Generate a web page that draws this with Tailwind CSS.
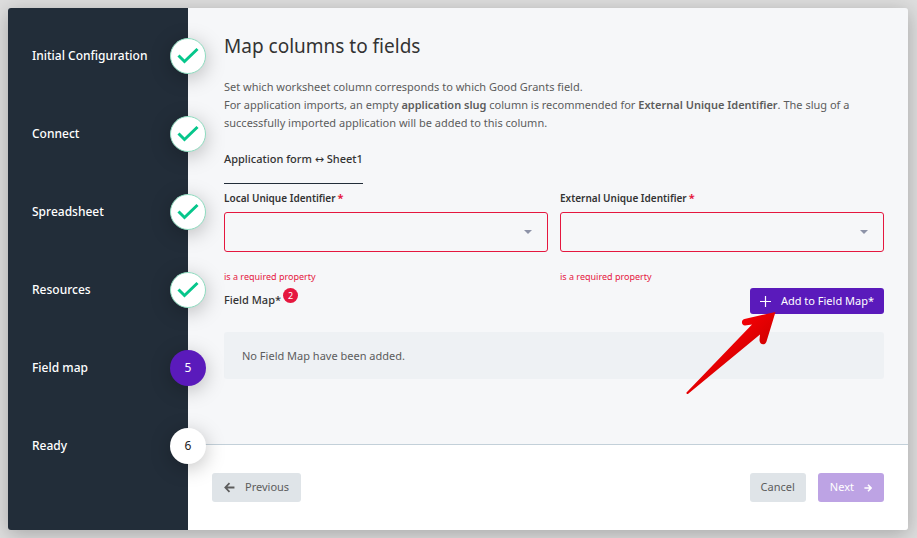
<!DOCTYPE html>
<html lang="en">
  <head>
    <meta charset="UTF-8" />
    <meta name="viewport" content="width=device-width, initial-scale=1.0" />
    <script src="https://cdn.jsdelivr.net/npm/@tailwindcss/browser@4"></script>
    <title>Map columns to fields</title>
  </head>
  <body class="min-h-screen bg-[#dedede] p-2 font-['Noto_Sans','Open_Sans',sans-serif] text-[11px] text-[#5c5c5c]">
    <div class="mr-px flex rounded-[3px] shadow-[0_4px_20px_rgba(0,0,0,0.25)]">
      <!-- Steps -->
      <nav class="relative z-10 w-[180px] shrink-0 rounded-l-[3px] bg-[#222d39] pt-[30px] pb-16 pl-6">
        <ol class="-mr-[18px] flex flex-col gap-[42px] text-xs font-medium text-white">
          <li class="flex items-center justify-between">
            Initial Configuration
            <span class="flex size-9 items-center justify-center rounded-full border border-[#8fdcc0] bg-white shadow-[0_4px_20px_rgba(0,0,0,0.25)]">
              <svg class="size-6" viewBox="0 0 24 24" fill="none" stroke="#06c68b" stroke-width="3"><path d="M2.5 11.5L8.5 17.5L21.5 5" /></svg>
            </span>
          </li>
          <li class="flex items-center justify-between">
            Connect
            <span class="flex size-9 items-center justify-center rounded-full border border-[#8fdcc0] bg-white shadow-[0_4px_20px_rgba(0,0,0,0.25)]">
              <svg class="size-6" viewBox="0 0 24 24" fill="none" stroke="#06c68b" stroke-width="3"><path d="M2.5 11.5L8.5 17.5L21.5 5" /></svg>
            </span>
          </li>
          <li class="flex items-center justify-between">
            Spreadsheet
            <span class="flex size-9 items-center justify-center rounded-full border border-[#8fdcc0] bg-white shadow-[0_4px_20px_rgba(0,0,0,0.25)]">
              <svg class="size-6" viewBox="0 0 24 24" fill="none" stroke="#06c68b" stroke-width="3"><path d="M2.5 11.5L8.5 17.5L21.5 5" /></svg>
            </span>
          </li>
          <li class="flex items-center justify-between">
            Resources
            <span class="flex size-9 items-center justify-center rounded-full border border-[#8fdcc0] bg-white shadow-[0_4px_20px_rgba(0,0,0,0.25)]">
              <svg class="size-6" viewBox="0 0 24 24" fill="none" stroke="#06c68b" stroke-width="3"><path d="M2.5 11.5L8.5 17.5L21.5 5" /></svg>
            </span>
          </li>
          <li class="flex items-center justify-between" aria-current="step">
            Field map
            <span class="flex size-9 items-center justify-center rounded-full bg-[#5a1abb] font-normal shadow-[0_4px_20px_rgba(0,0,0,0.25)]">5</span>
          </li>
          <li class="flex items-center justify-between">
            Ready
            <span class="flex size-9 items-center justify-center rounded-full bg-white font-normal text-[#222] shadow-[0_4px_20px_rgba(0,0,0,0.25)]">6</span>
          </li>
        </ol>
      </nav>

      <div class="flex min-w-0 flex-1 flex-col">
        <!-- Content -->
        <main class="flex-1 rounded-tr-[3px] border-b border-[#c3d0d9] bg-[#f6f7f9] pt-6 pr-6 pb-[65px] pl-9">
          <h1 class="text-[19px] leading-7 text-[#333]">Map columns to fields</h1>
          <div class="mt-[18px] leading-[18px]">
            <p>Set which worksheet column corresponds to which Good Grants field.</p>
            <p>
              For application imports, an empty <strong class="font-semibold">application slug</strong> column is recommended for
              <strong class="font-semibold">External Unique Identifier</strong>. The slug of a successfully imported application will be added to this column.
            </p>
          </div>

          <h2 class="mt-[19px] inline-block border-b border-[#222d39] pb-[15px] leading-4 font-medium text-[#333]">Application form <span class="font-['DejaVu_Sans']">↔</span> Sheet1</h2>

          <form>
            <div class="mt-[6px] grid grid-cols-2 gap-3">
              <div>
                <label for="local-id" class="flex gap-[2px] text-[10px] leading-4 font-semibold text-[#333]">Local Unique Identifier <span class="text-[11px] font-bold text-[#e5173f]">*</span></label>
                <div class="relative mt-[6px]">
                  <select id="local-id" class="block h-10 w-full appearance-none rounded-[3px] border border-[#e5173f] bg-transparent px-4"></select>
                  <svg class="pointer-events-none absolute top-[18px] right-4 h-1 w-2" viewBox="0 0 8 4" fill="#8d93a8"><path d="M0 0h8L4 4z" /></svg>
                </div>
                <p class="mt-[18px] text-[9px] leading-[14px] text-[#e5173f]">is a required property</p>
              </div>
              <div>
                <label for="external-id" class="flex gap-[2px] text-[10px] leading-4 font-semibold text-[#333]">External Unique Identifier <span class="text-[11px] font-bold text-[#e5173f]">*</span></label>
                <div class="relative mt-[6px]">
                  <select id="external-id" class="block h-10 w-full appearance-none rounded-[3px] border border-[#e5173f] bg-transparent px-4"></select>
                  <svg class="pointer-events-none absolute top-[18px] right-4 h-1 w-2" viewBox="0 0 8 4" fill="#8d93a8"><path d="M0 0h8L4 4z" /></svg>
                </div>
                <p class="mt-[18px] text-[9px] leading-[14px] text-[#e5173f]">is a required property</p>
              </div>
            </div>

            <div class="mt-1 flex items-start justify-between">
              <div class="flex items-start gap-[2px]">
                <h3 class="pt-1 leading-4 font-medium text-[#333]">Field Map*</h3>
                <span class="flex size-[15px] items-center justify-center rounded-full bg-[#e5173f] text-[9px] text-white">2</span>
              </div>
              <div class="relative">
                <button type="button" class="flex h-[26px] items-center gap-[10px] rounded-[3px] bg-[#5a1abb] px-[10px] text-white">
                  <svg class="size-[11px]" viewBox="0 0 11 11" fill="none" stroke="currentColor" stroke-width="1.2"><path d="M5.5 0v11M0 5.5h11" /></svg>
                  Add to Field Map*
                </button>
                <!-- Pointer arrow -->
                <svg class="pointer-events-none absolute top-[22px] right-[106px] h-[86px] w-[94px]" viewBox="0 0 94 86" aria-hidden="true">
                  <defs>
                    <linearGradient id="red" x1="0" y1="0" x2="1" y2="1">
                      <stop offset="0.3" stop-color="#fb0007" />
                      <stop offset="0.6" stop-color="#d80000" />
                    </linearGradient>
                  </defs>
                  <path fill="url(#red)" d="M91.5 2L60.5 9C56.5 10 57.5 15.5 61 15.5L68 14.5L2.5 82.5C2 84 3.5 84.5 4.5 83.5L76 24.5L75.5 30C75.5 35 81 36 82.5 31.5Z" />
                </svg>
              </div>
            </div>
            <p class="mt-[18px] rounded-[3px] bg-[#eef1f4] px-[18px] py-[14px] leading-[19px]">No Field Map have been added.</p>
          </form>
        </main>

        <!-- Actions -->
        <footer class="flex items-center rounded-br-[3px] bg-white px-6 py-7">
          <button type="button" class="mr-auto flex h-[29px] items-center gap-[10px] rounded-[3px] bg-[#dfe4e8] px-3">
            <svg class="size-[11px]" viewBox="0 0 10 10" fill="none" stroke="currentColor" stroke-width="1.6"><path d="M9.5 5H1.5M5 1L1.2 5L5 9" /></svg>
            Previous
          </button>
          <button type="button" class="h-[29px] rounded-[3px] bg-[#dfe4e8] px-[11px]">Cancel</button>
          <button type="button" class="ml-3 flex h-[29px] items-center gap-[10px] rounded-[3px] bg-[#bda3e4] px-3 text-white">
            Next
            <svg class="size-2" viewBox="0 0 10 10" fill="none" stroke="currentColor" stroke-width="2"><path d="M0.5 5H8.5M5 1L8.8 5L5 9" /></svg>
          </button>
        </footer>
      </div>
    </div>
  </body>
</html>
